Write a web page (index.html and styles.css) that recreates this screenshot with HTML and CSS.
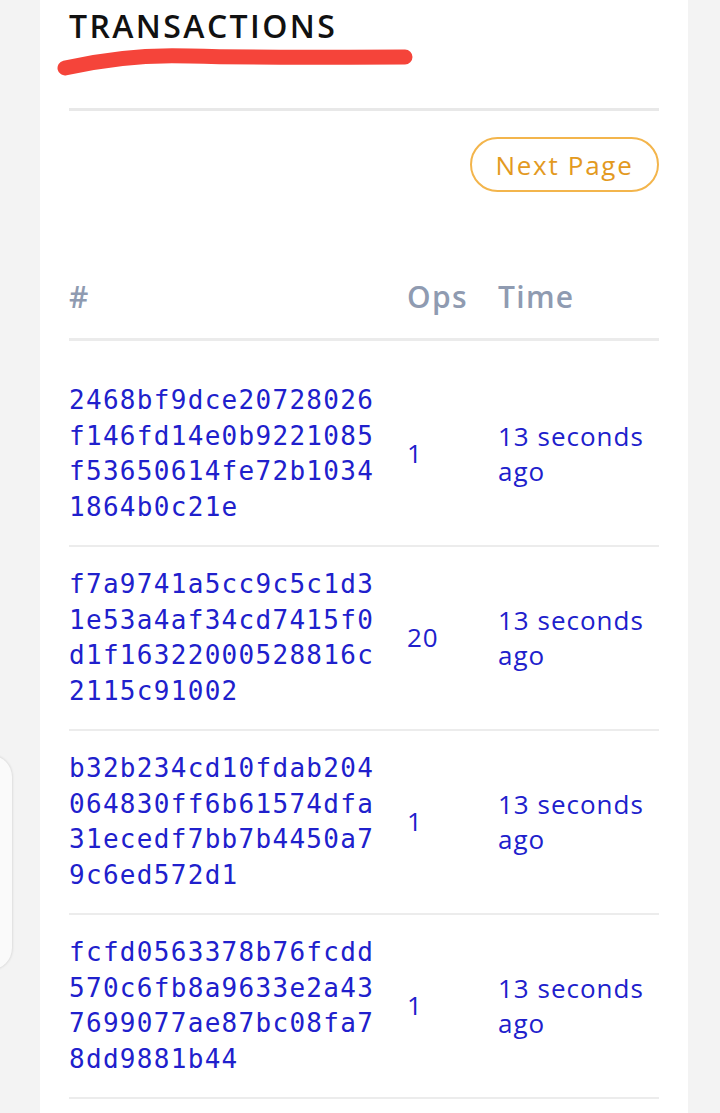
FILE: index.html
```html
<!DOCTYPE html>
<html lang="en">
<head>
<meta charset="utf-8">
<title>Transactions</title>
<link rel="stylesheet" href="styles.css">
</head>
<body>
<div class="page">
  <main class="card">
    <h2 class="title">TRANSACTIONS</h2>
    <svg class="scribble" width="380" height="40" viewBox="0 0 380 40" aria-hidden="true">
      <path d="M8 30 C 43 22, 83 16, 133 18 C 203 20, 273 19, 348 19" fill="none" stroke="#f5443a" stroke-width="15" stroke-linecap="round"/>
    </svg>
    <hr class="rule">
    <div class="pager">
      <button class="next-btn" type="button">Next Page</button>
    </div>
    <div class="table">
      <div class="thead">
        <div class="th">#</div>
        <div class="th">Ops</div>
        <div class="th">Time</div>
      </div>
      <div class="tbody">
        <div class="tr">
          <div class="hash">2468bf9dce20728026f146fd14e0b9221085f53650614fe72b10341864b0c21e</div>
          <div class="ops">1</div>
          <div class="time">13 seconds ago</div>
        </div>
        <div class="tr">
          <div class="hash">f7a9741a5cc9c5c1d31e53a4af34cd7415f0d1f16322000528816c2115c91002</div>
          <div class="ops">20</div>
          <div class="time">13 seconds ago</div>
        </div>
        <div class="tr">
          <div class="hash">b32b234cd10fdab204064830ff6b61574dfa31ecedf7bb7b4450a79c6ed572d1</div>
          <div class="ops">1</div>
          <div class="time">13 seconds ago</div>
        </div>
        <div class="tr">
          <div class="hash">fcfd0563378b76fcdd570c6fb8a9633e2a437699077ae87bc08fa78dd9881b44</div>
          <div class="ops">1</div>
          <div class="time">13 seconds ago</div>
        </div>
      </div>
    </div>
  </main>
  <div class="side-tab" aria-hidden="true"></div>
</div>
</body>
</html>
```

FILE: styles.css
```css
* { box-sizing: border-box; }

html, body {
  margin: 0;
  padding: 0;
  background: #f3f3f3;
  font-family: "Open Sans", Lato, "Liberation Sans", sans-serif;
}

.page {
  position: relative;
  width: 720px;
  height: 1113px;
  overflow: hidden;
}

.card {
  position: relative;
  margin: 0 32px 0 40px;
  width: 648px;
  min-height: 1113px;
  background: #ffffff;
  padding: 7px 29px 0 29px;
}

.title {
  margin: 0;
  font-size: 32px;
  line-height: 38px;
  font-weight: 600;
  letter-spacing: 2.4px;
  color: #111111;
}

.scribble {
  position: absolute;
  left: 17px;
  top: 38px;
}

.rule {
  margin: 63px 0 0 0;
  border: 0;
  height: 3px;
  background: #e8e8e8;
}

.pager {
  display: flex;
  justify-content: flex-end;
  margin-top: 26px;
}

.next-btn {
  width: 189px;
  height: 55px;
  border: 2px solid #f3b54c;
  border-radius: 28px;
  background: #ffffff;
  color: #e39a1f;
  font-family: "Open Sans", Lato, "Liberation Sans", sans-serif;
  font-size: 26px;
  letter-spacing: 1.7px;
  padding: 0;
}

.table {
  margin-top: 87px;
}

.thead {
  display: grid;
  grid-template-columns: 338px 91px 1fr;
  padding-bottom: 23px;
  border-bottom: 3px solid #ebebeb;
}

.th {
  font-size: 30px;
  line-height: 36px;
  font-weight: 600;
  letter-spacing: 1.3px;
  color: #8f9bb1;
}

.tbody {
  padding-top: 22px;
}

.tr {
  display: grid;
  grid-template-columns: 338px 91px 1fr;
  align-items: center;
  padding: 20px 0;
  border-bottom: 2px solid #ececec;
}

.hash {
  width: 310px;
  font-family: "DejaVu Sans Mono", "Liberation Mono", monospace;
  font-size: 26px;
  line-height: 35.5px;
  letter-spacing: 1.3px;
  word-break: break-all;
  color: #2020cc;
}

.ops, .time {
  font-size: 26px;
  line-height: 35.5px;
  letter-spacing: 1px;
  color: #2020cc;
}

.side-tab {
  position: absolute;
  left: -40px;
  top: 755px;
  width: 52px;
  height: 215px;
  border-radius: 22px;
  background: #fafafa;
  box-shadow: 0 0 3px rgba(0,0,0,0.18);
}
```
